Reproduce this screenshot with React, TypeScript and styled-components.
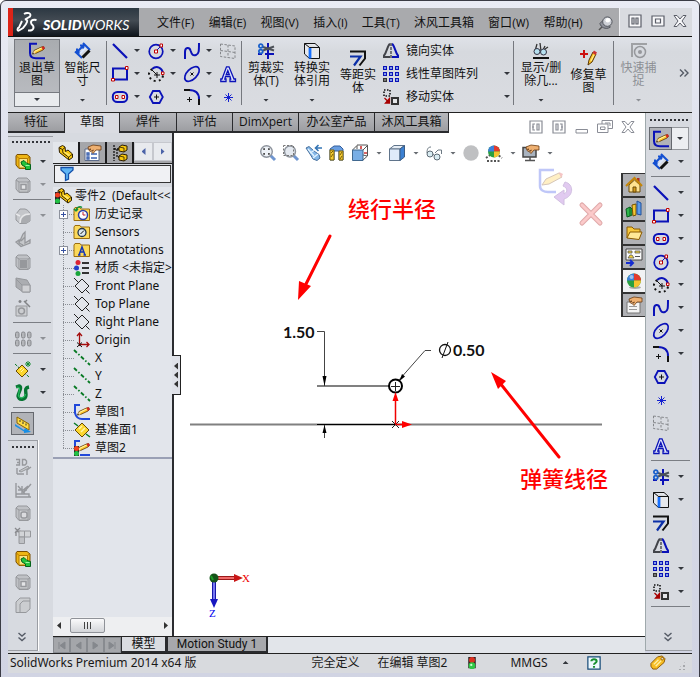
import React from 'react';
import styled, { createGlobalStyle, css } from 'styled-components';

const GlobalStyle = createGlobalStyle`
  *, *::before, *::after { box-sizing: border-box; }
  body { margin: 0; font: 12px/14px "Noto Sans", "Noto Sans CJK SC", sans-serif; color: #111; }
  button { font: inherit; color: inherit; background: none; border: 0; padding: 0; margin: 0; }
  ul { list-style: none; margin: 0; padding: 0; }
`;

/* ---------- icons ---------- */

const Svg = styled.svg<{ $size?: number }>`
  width: ${p => p.$size ?? 16}px;
  height: ${p => p.$size ?? 16}px;
  flex: none;
  display: block;
  overflow: visible;
  fill: none;
`;

const B = '#0b12b8';
const R = '#c00000';
const K = '#111';
const G = '#96989c';

const pencil = (
  <>
    <path d="M3.500 11 5 7.500 12.500 4 14.500 3.500 15.500 5.500 14 7 6.500 10.500Z" fill="#ffc62a" stroke="#5a3500" strokeWidth=".8" />
    <path d="M5.500 8.500 12.500 5" stroke="#fff3a0" strokeWidth="1.200" />
    <path d="M12.500 4 15 3.300 15.800 5.300 13.800 7Z" fill="#d22626" />
    <path d="M3.500 11 5 7.800 6.500 10.300Z" fill="#f7ddb0" />
    <path d="M3.300 11.200 4.200 9.500 5 10.600Z" fill="#111" />
  </>
);

const yellowPart = (
  <>
    <path d="M1 2 2 .5H12L15 3V12L13 14.500H4L1 11Z" fill="#eeb513" stroke="#7a4e00" />
    <path d="M4 4.500H12.500V14H4Z" fill="#fbe584" stroke="#b47a00" />
    <path d="M1.500 2 4 4.500M12.500 4.500 14.500 3" stroke="#b47a00" />
  </>
);

const partShape = (
  <>
    <path d="M1 2.500 4.500.5 7 2 7.500 6.500 10 5 14.500 9 14.500 12.500 11 15 1.500 7.500Z" fill="#f6c70f" stroke="#2c1d00" />
    <path d="M1.500 3 4.500 4.500 5 8 10.500 12V14.500M10.500 12 14 9.500M4.500 4.500 7 2.500" stroke="#2c1d00" strokeWidth=".9" />
    <path d="M5 6.500 7.500 7 12.500 10 10.500 11.500Z" fill="#ffe96a" />
  </>
);

const hand = (
  <path d="M3 2 8 0 16 1V5L11 5 8 8.500 6.500 7 8.500 5 5 6.500 4 5.500 6 4 3.500 4.500Z" fill="#eeb071" stroke="#6b3b12" strokeWidth=".8" />
);

const folder = (
  <path d="M0 3 1 1.500H6L7 3H15.500V14.500H0Z" fill="#fbd95b" stroke="#9b6e10" />
);

const greyCube = (
  <>
    <path d="M1 3 3 1H12L15 4V14L13 15.500H4L1 12Z" fill="#bfc1c5" stroke={G} />
    <path d="M4 5H13V15H4Z" fill="#cdcfd2" stroke={G} />
    <path d="M1 3 4 5M13 5 15 4" stroke={G} />
  </>
);

const icons = {
  exitSketch: <><path d="M8 .8H1V10C1 14 4 15.200 7 15.200H16" stroke={B} strokeWidth="2" />{pencil}</>,
  dimension: (
    <>
      <path d="M2 9 8 3M5 2.500H8.500V6M2 5.500V9.500H5.500M0 8.500 7 15M8 0 15 7" stroke="#1450d2" strokeWidth="2" />
      <path d="M7.500 14.500 14.500 7.500" stroke={K} strokeWidth="3" />
      <path d="M5 10.500 10.500 5" stroke="#dbe7ff" strokeWidth="2" />
    </>
  ),
  line: <path d="M1 1 15 15" stroke={B} strokeWidth="2.200" />,
  circle: (
    <>
      <circle cx="8" cy="8.500" r="6.800" stroke={B} strokeWidth="1.700" />
      <path d="M8 8 13 3" stroke={B} />
      <path d="M6.500 7H9.500V10H6.500ZM12 1H14.500V4H12Z" fill="#fff" stroke={R} />
    </>
  ),
  spline: <path d="M1 16V9C1 4 5.500 4 6.500 7.500 8 12 9 13 12 12 15 11 15 8 15 0" stroke={B} strokeWidth="2" />,
  plane: <path d="M.5 1 15 3V15.500L.5 13.500ZM.5 7.500 15 9.500M8 2V14.500" stroke="#85878b" strokeDasharray="2.500 1.500" />,
  rect: (
    <>
      <path d="M1 2.500H15V13.500H1Z" stroke={B} strokeWidth="2" />
      <path d="M-.5 12.500H2.500V15H-.5ZM13.500.5H16V3.500H13.500Z" fill="#fff" stroke={R} />
    </>
  ),
  arc: (
    <>
      <path d="M4 3C9-1 14 2 15 7" stroke={B} strokeWidth="2" />
      <path d="M15 9.500C14.500 13 12 15 8 15 4 15 1 12 1 8 1 6 2 5 4 3" stroke={K} strokeWidth="2" strokeDasharray="2 3" />
      <path d="M4 4 9 9M9 6V12M6 9H12" stroke={K} />
      <path d="M13.500 6H16V8.500H13.500Z" fill="#fff" stroke={R} />
    </>
  ),
  ellipse: (
    <>
      <ellipse cx="8" cy="8" rx="9" ry="5" transform="rotate(-45 8 8)" stroke={B} strokeWidth="1.700" />
      <path d="M6.500 6.500 9.500 9.500M9.500 6.500 6.500 9.500" stroke={K} />
    </>
  ),
  text: (
    <path d="M.8 15.500V13H2L6.500 .8H9L14 13H15.500V15.500H10V13H10.700L10 10.500H5.500L4.800 13H6V15.500ZM6.200 8.500H9.300L7.800 4.500Z" fill="#dfe5fa" stroke={B} strokeWidth="1.300" />
  ),
  slot: (
    <>
      <rect x=".8" y="3" width="14.400" height="10" rx="4.500" stroke={B} strokeWidth="2" />
      <path d="M3.500 6.500H6V9.500H3.500ZM10 6.500H12.500V9.500H10Z" fill="#fff" stroke={R} />
    </>
  ),
  polygon: (
    <>
      <path d="M5 2H11.500L14.800 8 11.500 14H5L1.800 8Z" stroke={B} strokeWidth="1.800" />
      <path d="M8.500 5.500V10.500M6 8H11" stroke={K} />
    </>
  ),
  fillet: (
    <>
      <path d="M5 1C11 1 15 4 15 10" stroke={B} strokeWidth="2" />
      <path d="M0 1H6M15 10V16" stroke={K} strokeWidth="2" />
      <path d="M5.500 8V13M3 10.500H8" stroke={K} />
    </>
  ),
  point: <path d="M8.500 4V13M4 8.500H13M5.500 5.500 11.500 11.500M11.500 5.500 5.500 11.500" stroke="#1420d0" />,
  trim: (
    <>
      <path d="M0 11H4M7 11H16M10 16V0" stroke={B} strokeWidth="2" />
      <path d="M5 4 16 7.500M5 7.500 16 3.500" stroke="#4c5158" strokeWidth="2" />
      <circle cx="2.800" cy="3" r="1.900" stroke="#1960cb" strokeWidth="1.800" />
      <circle cx="2.800" cy="8.500" r="1.900" stroke="#1960cb" strokeWidth="1.800" />
    </>
  ),
  convert: (
    <>
      <path d="M.5 .5H11L15.500 4.500V15.500H5.500L.5 11ZM.5 .5 5.500 4.500H15.500M5.500 4.500V15.500" fill="#e6e8ec" stroke={K} />
      <path d="M6 5V15.500" stroke="#1670ff" strokeWidth="2.800" />
    </>
  ),
  offset: (
    <>
      <path d="M0 1.500H15V8.500L9.500 15.500" stroke={K} strokeWidth="2" />
      <path d="M0 6.500H10.500L4 15.500" stroke="#0b2fa8" strokeWidth="2.200" />
    </>
  ),
  mirror: (
    <>
      <path d="M7 1C4.500 2 4 9 1 12.500V14H7" stroke="#42444a" strokeWidth="2" />
      <path d="M9 1C11.500 2 12 9 15 12.500V14H9" stroke={B} strokeWidth="2" />
      <path d="M8 0V16" stroke={K} strokeDasharray="3 1" />
    </>
  ),
  pattern: (
    <>
      {[0, 6, 12].map(y => [0, 6, 12].map(x => (
        <g key={`${x}-${y}`}>
          <path d={`M${x} ${y}h4v4h-4Z`} fill={x === 0 && y === 12 ? '#333' : B} />
          <path d={`M${x + 1} ${y + 1}h2v2h-2Z`} fill={x === 0 && y === 12 ? '#777' : '#7f9bea'} />
        </g>
      )))}
    </>
  ),
  move: (
    <>
      <path d="M1 1H7V7H1Z" stroke={K} strokeWidth="1.600" strokeDasharray="1.500 1.500" />
      <path d="M9 9H15V15H9Z" fill="#e5e6e8" stroke="#333" strokeWidth="2" />
      <path d="M1.500 9 5 12.500M6.500 9.500V14H2.500Z" fill="#a80000" stroke="#a80000" strokeWidth="1.300" />
    </>
  ),
  display: (
    <>
      <path d="M4 1 2 8M7 0 8 8M12 3 10 7M15 4 12 6" stroke="#333" strokeWidth="1.300" />
      <circle cx="4" cy="8.500" r="3" fill="#b6e0ef" stroke="#334" />
      <circle cx="10.500" cy="9" r="3" fill="#b6e0ef" stroke="#334" />
      <path d="M0 15H16" stroke={K} strokeWidth="2" />
    </>
  ),
  repair: (
    <>
      <path d="M-1 4H7M3 0V8" stroke="#cc1010" strokeWidth="2" />
      <path d="M7 15 8 10 12 2 15 4 11 12Z" fill="#ffc62a" stroke="#5a3500" />
      <path d="M11.500 3 13 .5 16 2.500 14.500 5Z" fill="#c33" />
      <path d="M10 11 13 5" stroke="#fff3a0" />
    </>
  ),
  snap: (
    <>
      <path d="M0 1H16M1 0V14" stroke="#9fa1a4" strokeWidth="2" />
      <circle cx="9" cy="9" r="5.500" stroke={G} strokeWidth="1.500" />
      <circle cx="9" cy="9" r="2" fill={G} />
    </>
  ),
  greenPart: (
    <>
      {yellowPart}
      <path d="M6 8 9 6.500 12 9.500 15.500 10.500V15.500H10.500V13L7 11Z" fill="#23c33b" stroke="#04631b" />
      <path d="M10.500 11.500H14.500" stroke="#9bf5a5" />
    </>
  ),
  greyPart: <>{greyCube}<path d="M6 7.500H11V12.500H6Z" fill="#e3e4e6" stroke={G} strokeWidth="1.500" /></>,
  greySphere: (
    <>
      <path d="M1 6 5 1H10C13 2 15 4 15 7V13L11 15.500H5L1 12Z" fill="#c4c6ca" stroke={G} />
      <path d="M5 15C5 9 8 6 15 6M1 6 5 8" stroke="#e6e7e9" strokeWidth="1.500" />
      <path d="M6 15C6 10 9 7 15 7V13L11 15.500Z" fill="#aaacb0" />
    </>
  ),
  greyRib: <path d="M1 11 4 9V12L8 3 10 1V12L15 9V12L6 15.500ZM6 10 10 6M4 12 8 14" fill="#c6c8cb" stroke={G} strokeWidth="1.300" />,
  greyShell: <>{greyCube}<path d="M5 6H12V14H5Z" fill="#96989c" /></>,
  greyDraft: <><path d="M1 1 12 3 15 8V15H8L1 10Z" fill="#abadb1" stroke={G} /><path d="M7 8H15V15H7ZM1 2 7 8" fill="#d0d1d4" stroke={G} /></>,
  greyWand: (
    <>
      <path d="M1 6H12V16H1Z" fill="#ccced1" stroke={G} />
      <circle cx="6.500" cy="11" r="3" stroke={G} strokeWidth="1.500" />
      <path d="M9 1 15 7M5 0V3M3.500 1.500H6.500M12 0 10 2" stroke="#828487" strokeWidth="1.500" />
    </>
  ),
  greyPattern: (
    <>
      {[0, 6, 12].map(x => [1, 9].map(y => (
        <rect key={`${x}-${y}`} x={x + .5} y={y} width="3.500" height="6" rx="1.500" fill="#b4b6ba" stroke="#86888c" />
      )))}
    </>
  ),
  refGeom: (
    <>
      <path d="M0 2 14 15" stroke="#087a24" strokeDasharray="3 1" />
      <path d="M1 9 7 3 13 9 7 15Z" fill="#fcd62f" stroke="#6a4b00" />
      <path d="M5 8 7 6M6 10 9 7" stroke="#fff6a8" />
      <path d="M13 -1V5M10 2H16M11 0 15 4M15 0 11 4" stroke="#168b33" />
    </>
  ),
  curves: (
    <>
      <path d="M1 2 4 1C8 2 3 8 3 11 4 16 11 15 11 10 11 6 9 3 14 2" stroke="#067432" strokeWidth="3.400" />
      <path d="M2 2C7 2 3 8 3.500 11 5 14 10 13 10.500 9" stroke="#24bd5d" strokeWidth="1.200" />
    </>
  ),
  instant: (
    <>
      <path d="M2 1 14 8V14L2 7Z" fill="#ffdc42" stroke="#8b6500" />
      <path d="M5 4V6M8 5.500V8M11 7.500V9.500" stroke="#333" />
      <path d="M0 8 9 14 10 12 16 16 9 17 9 15.500 0 10Z" fill="#188fe6" />
    </>
  ),
  sketch3d: (
    <>
      <path d="M1 .5H4.500V6H1M2 3.500H4.500M7.500 .5V6H10L11.500 4.500V2L10 .5ZM2 15H9M2 15V9M12 16V11L16 8" stroke={G} strokeWidth="1.400" />
      <path d="M4 12 13 7 14 9 6 13Z" fill="#c5c7ca" stroke={G} />
    </>
  ),
  greyChart: <path d="M1 1V15H16M1 12H14V15M3 4 10 12M13 4 7 9M16 2 9 10M7 4V12M3 8H12" stroke={G} strokeWidth="1.400" />,
  greyBox: <>{greyCube}<rect x="6" y="7" width="6" height="6" rx="2" fill="#dadbde" stroke={G} strokeWidth="1.500" /></>,
  greyTree: (
    <>
      <path d="M0 0 5 5M5 0 0 5M1 8V3.500H6" stroke="#88898d" strokeWidth="1.300" />
      <path d="M4 3H9.500V9H4ZM9.500 3H15.500V9H9.500Z" fill="#d2d4d7" stroke={G} />
      <path d="M4 9H9.500V15.500H4Z" fill="#bfc1c5" stroke={G} />
    </>
  ),
  greyCorner: <path d="M1 5 5 1H15V12L11 15.500H1ZM5 15V7L8 4H15" fill="#cbcdd0" stroke={G} />,
  part: partShape,
  partLight: (
    <>
      <g transform="translate(2 0)">{partShape}</g>
      <path d="M0 4H5V16H0Z" fill="#222" />
      <circle cx="2.500" cy="7" r="2.500" fill="#f04020" />
      <circle cx="2.500" cy="13" r="2.500" fill="#22c044" />
    </>
  ),
  properties: (
    <>
      <path d="M0 4H14V15.500H0Z" fill="#fff" stroke="#5c6b89" />
      <path d="M2 8H4V10H2ZM2 12H4V14H2ZM6 9H12M6 13H12" stroke="#3c62b0" strokeWidth="1.300" />
      {hand}
    </>
  ),
  config: (
    <>
      <path d="M2 0V16M2 4H8M5 4V12H8" stroke={K} strokeWidth="1.300" strokeDasharray="2 1" />
      <path d="M7 2 10 0 15 1V5L12 7 7 6ZM7 11 10 9 15 10V14L12 16 7 15Z" fill="#f6c70f" stroke="#2c1d00" />
      <path d="M7 2 12 3V7M7 11 12 12V16" stroke="#2c1d00" strokeWidth=".8" />
    </>
  ),
  filter: <path d="M2 1.500H14V4L9.500 8V13L6.500 14.500V8L2 4Z" fill="#5fb5f5" stroke="#1551ab" strokeWidth="1.300" />,
  history: (
    <>
      {folder}
      <circle cx="9" cy="9" r="4.500" fill="#fff" stroke="#2b3fa8" strokeWidth="1.500" />
      <path d="M9 6V9H11.500" stroke="#c01e2c" /><path d="M2 5C2 1 6 0 8 1.500M2 5 0 3M2 5 4 3" stroke="#11903a" strokeWidth="1.500" />
    </>
  ),
  sensors: <>{folder}<circle cx="8" cy="8.500" r="4" fill="#dbe8ee" stroke="#25364a" strokeWidth="1.300" /><path d="M6.500 10 10 6.500" stroke={K} /></>,
  annotations: <>{folder}<path d="M4 13H6.500M9.500 13H12M5 13 8 5 11 13M6 10H10" stroke="#1636b4" strokeWidth="1.500" /></>,
  material: (
    <>
      <circle cx="4" cy="2.500" r="2.500" fill="#dc2334" /><circle cx="2.500" cy="8" r="2.500" fill="#243fc9" /><circle cx="4" cy="13.500" r="2.500" fill="#18a43a" />
      <path d="M8 3H15M8 8H15M8 13H15" stroke="#333" strokeWidth="1.800" />
    </>
  ),
  refPlane: <path d="M0 0 5 5M11 11 15.500 15.500M8 1 15 8 8 15 1 8ZM8 1 15 8" stroke="#222" />,
  origin: <><path d="M5.500 14V1M3 4 5.500 1 8 4M5 12.500H15M12.500 10 15 12.500 12.500 15" stroke="#a40d0d" strokeWidth="1.300" /><path d="M3 10.500 8 15M8 10.500 3 15" stroke={K} /></>,
  axis: <path d="M0 0 16 15" stroke="#087a24" strokeWidth="1.800" strokeDasharray="4 2 1.500 2" />,
  plane1: <><path d="M0 1 4 4M12 12 16 15" stroke="#087a24" strokeWidth="1.500" /><path d="M1 8 8 1 15 8 8 15Z" fill="#fcd62f" stroke="#6a4b00" /><path d="M5 7 8 4M7 10 11 6" stroke="#fff6a8" strokeWidth="1.500" /></>,
  sketchTree: <><path d="M6 1H1V9C2 13 5 15 8 15H16" stroke="#2148da" strokeWidth="2" />{pencil}</>,
  sketchLight: (
    <>
      <path d="M6 1H1V9M6 15H16" stroke="#2148da" strokeWidth="2" />{pencil}
      <path d="M0 6H5V16H0Z" fill="#222" /><circle cx="2.500" cy="8.500" r="2.500" fill="#f04020" /><circle cx="2.500" cy="13.500" r="2.500" fill="#22c044" />
    </>
  ),
  zoomFit: (
    <>
      <path d="M10 10 15 15" stroke="#6f95cf" strokeWidth="3" /><circle cx="6.500" cy="6.500" r="5.800" fill="#eef2f7" stroke="#8d939c" strokeWidth="1.400" />
      <path d="M4 5V4H5M8 4H9V5M9 8V9H8M5 9H4V8" stroke="#444" strokeWidth="1.500" />
    </>
  ),
  zoomArea: (
    <>
      <path d="M10 10 15 15" stroke="#6f95cf" strokeWidth="3" /><circle cx="7" cy="6.500" r="5.500" fill="#e4e9f0" stroke="#8d939c" strokeWidth="1.400" />
      <path d="M.5 .5H10.500V10.500H.5Z" stroke="#777" strokeDasharray="2 1.500" />
    </>
  ),
  prevView: (
    <>
      <path d="M0 3 3 1.500 8 6 13 9.500 14 13 11 15.500 7 14 4 9Z" fill="#85b8e8" stroke="#466f9d" />
      <path d="M2 4 8 11M4 8 8 5.500M7 13 12 9" stroke="#e3f3ff" strokeWidth="1.300" />
      <path d="M10 3H16M12.500 0 9.500 3 12.500 6" stroke="#3575b5" strokeWidth="1.600" />
    </>
  ),
  section: (
    <>
      <path d="M1 4 5 1H11L14 4V15H10V6H5V15H1Z" fill="#699ee1" stroke="#335f9c" />
      <path d="M1 5H5V15H1ZM10 6H14V15H10Z" fill="#f3ca33" stroke="#7a6008" />
      <path d="M2 8 4 6M2 12 4 9M11 10 13 7M11 14 13 11" stroke="#7a6008" />
    </>
  ),
  orient: <><path d="M5 0H15.500V11L11 15M.5 5 5 .5M11 5 15.500.5M5 .5V4M11 10 15 11" stroke="#555" /><path d="M.5 5H11V15.500H.5Z" fill="#79aee5" stroke="#41688f" /><path d="M9 1V4M12 8H15" stroke="#d03434" strokeWidth="1.600" /></>,
  style: <><path d="M.5 4 5 .5H15.500L11 4Z" fill="#e6edf5" stroke="#60748b" /><path d="M.5 4H11V15.500H.5Z" fill="#dfeafa" stroke="#60748b" /><path d="M11 4 15.500.5V12L11 15.500Z" fill="#3b80d2" stroke="#3c5d84" /></>,
  glasses: <><path d="M1 8C1 4 2 2 5 2M9 8 12 5 15.500 5V9" stroke="#6d7a84" /><circle cx="4" cy="9" r="3" fill="#d9ecf2" stroke="#5e6b75" /><circle cx="11" cy="12" r="3" fill="#d9ecf2" stroke="#5e6b75" /><path d="M6.500 9 8.500 10.500" stroke="#5e6b75" /></>,
  greyBall: <circle cx="8" cy="8" r="7.700" fill="#bfc0c2" />,
  ball: (
    <>
      <ellipse cx="9" cy="14.500" rx="6" ry="1.500" fill="#aaa" />
      <circle cx="8" cy="7.500" r="7" fill="#2aa040" /><path d="M8 7.500V.5A7 7 0 0 1 15 7.500Z" fill="#e33a2d" />
      <path d="M8 7.500H15A7 7 0 0 1 8 14.500Z" fill="#f6c330" /><path d="M8 7.500H1A7 7 0 0 1 8 .5Z" fill="#3c80da" /><circle cx="5.500" cy="4" r="2" fill="#fff" opacity=".5" />
    </>
  ),
  scene: (
    <>
      <path d="M0 13 4 10H12L16 13M1 16H15" stroke="#555" strokeWidth="2" strokeDasharray="2 1.500" />
      <circle cx="8" cy="6.500" r="6" fill="#2aa040" /><path d="M8 6.500V.5A6 6 0 0 1 14 6.500Z" fill="#e33a2d" /><path d="M8 6.500H14A6 6 0 0 1 8 12.500Z" fill="#f6c330" /><path d="M8 6.500H2A6 6 0 0 1 8 .5Z" fill="#3c80da" />
    </>
  ),
  viewSettings: <><path d="M0 2.500H13V12H0Z" fill="#a9b3bf" stroke="#444" strokeWidth="1.500" /><path d="M7 12V15M2 15.500H12" stroke="#555" strokeWidth="1.500" />{hand}</>,
  home: <><path d="M11 1H13.500V6H11Z" fill="#b02e20" /><path d="M3 8V15H14V8L8.500 3Z" fill="#ffe391" stroke="#6a4a08" /><path d="M0 9 8.500 1 16 9" stroke="#c58608" strokeWidth="2" /><path d="M7 10H10V15H7Z" fill="#d59b1d" stroke="#6a4a08" /></>,
  library: <><path d="M0 8 4 6V15L1 16ZM4 6 6 8V14L4 15" fill="#2eb64a" stroke="#0a5c20" /><path d="M6 4 10 3V14L7 15Z" fill="#f4c534" stroke="#755400" /><path d="M11 0 15 2V14L11 13Z" fill="#5b9bea" stroke="#20509a" /></>,
  openFolder: <><path d="M1 13V2H6L8 4H14V8" fill="#f7c83c" stroke="#8a5a00" /><path d="M1 13 4 7H16L13 14.500Z" fill="#ffe896" stroke="#8a5a00" /></>,
  palette: <><path d="M0 0H16V11H0Z" fill="#fafafa" stroke="#444" /><path d="M2 2H6V4H2ZM9 2H14V4H9ZM2 9 4 6H6L8 9Z" fill="#f6d43a" stroke="#555" strokeWidth=".8" /><path d="M9 7.500H14" stroke="#555" /><path d="M0 14H6M4 11 7 14 4 17" stroke="#142bd0" strokeWidth="2" /></>,
  custom: <><path d="M1 5H14V16H1Z" fill="#f4f4f4" stroke="#777" /><path d="M3 9.500H11M3 12.500H11" stroke="#999" />{hand}</>,
  light: <><path d="M3 0H13V15H3Z" fill="#2b2222" /><circle cx="8" cy="4" r="4" fill="#dc3020" /><circle cx="8" cy="11.500" r="4.500" fill="#31c746" /><circle cx="7" cy="10.500" r="1.500" fill="#caffcf" /></>,
  help: <><path d="M1 1H15V15H1Z" fill="#eefaff" stroke="#174b77" strokeWidth="1.400" /><path d="M5 6C5 3 11 3 11 6 11 8 8 8 8 10M8 11.500V13.500" stroke="#17902f" strokeWidth="2.400" /></>,
  tag: <><path d="M1 9 8 2 13 1 16 4 15 8 7 15 3 15 1 12Z" fill="#f7bd22" stroke="#8c5600" /><path d="M4 10 9 5M6 12 12 6" stroke="#fff0a5" strokeWidth="1.500" /><circle cx="13" cy="4" r="1.300" fill="#fff" stroke="#8c5600" /></>,
  pin: <><path d="M1 15 5 11" stroke="#555" strokeWidth="1.500" /><path d="M2 8C3 12 8 15 13 12L12 9 5 5Z" fill="#8e919a" stroke="#4e5159" /><circle cx="10" cy="6" r="5" fill="#cdd0d6" stroke="#4e5159" /><circle cx="10.500" cy="4.500" r="2.500" fill="#fff" /></>,
  split: <path d="M2 2H14V14H2ZM5 5H7V11H5ZM9 5H11V11H9Z" fill="#f8f8fa" stroke="#5b5e68" strokeWidth="1.200" />,
  restore: <path d="M2 3H14V13H2ZM5.500 6H10.500V10H5.500Z" fill="#f8f8fa" stroke="#5b5e68" strokeWidth="1.200" />,
  close: <path d="M2 2.500H5L8 6 11 2.500H14L10 8 14 13.500H11L8 10 5 13.500H2L6 8Z" fill="#f8f8fa" stroke="#5b5e68" />,
  dockLeft: <path d="M2 2H14V14H2ZM7 5H5V11H7M9 5H11V11H9ZM4 8H6" stroke="#8a8d96" strokeWidth="1.200" />,
  dockRight: <path d="M2 2H14V14H2ZM5 5H7V11H5ZM9 5H11V11H9M10 8H12" stroke="#8a8d96" strokeWidth="1.200" />,
  minimize: <path d="M2 10.500H13.500V14H2Z" fill="#fff" stroke="#8a8d96" />,
  cascade: <path d="M5 5V1.500H15.500V9.500H11M.5 5H11V13.500H.5ZM3.500 8H8V10.500H3.500ZM8 4H13V7" stroke="#8a8d96" />,
  closeView: <path d="M2 2.500H5L8 6 11 2.500H14L10 8 14 13.500H11L8 10 5 13.500H2L6 8Z" fill="#fff" stroke="#8a8d96" />,
  chevronDown: <path d="M4.500 4 8 7 11.500 4M4.500 8.500 8 11.500 11.500 8.500" stroke="#555b66" strokeWidth="1.400" />,
  chevronRight: <path d="M4 4.500 7.500 8 4 11.500M8.500 4.500 12 8 8.500 11.500" stroke="#555b66" strokeWidth="1.400" />,
};

type IconName = keyof typeof icons;

const Icon = ({ name, size }: { name: IconName; size?: number }) => (
  <Svg viewBox="0 0 16 16" $size={size} aria-hidden="true">{icons[name]}</Svg>
);

/* ---------- shared pieces ---------- */

const Caret = styled.span<{ $grey?: boolean; $up?: boolean }>`
  width: 6px;
  height: 3px;
  flex: none;
  background: ${p => (p.$grey ? '#8d9095' : '#33363c')};
  clip-path: ${p => (p.$up ? 'polygon(50% 0, 100% 100%, 0 100%)' : 'polygon(0 0, 100% 0, 50% 100%)')};
`;

const IconButton = styled.button`
  display: grid;
  place-items: center;
  flex: none;
`;

/* ---------- frame ---------- */

const Frame = styled.div`
  min-height: 100vh;
  display: flex;
  flex-direction: column;
  padding: 7px 7px 5px;
  border: 1px solid #3a3b45;
  border-radius: 6px 6px 2px 2px;
  background: linear-gradient(#e9ebf4, #dcdeeb 30%, #d1d4e3);
`;

const TitleBar = styled.header`
  display: flex;
  align-items: stretch;
  height: 29px;
  background: #a9aaad;
  border-bottom: 1px solid #111;
`;

const Brand = styled.div`
  display: flex;
  align-items: center;
  gap: 6px;
  width: 131px;
  flex: none;
  padding-left: 4px;
  border-left: 5px solid #dc2418;
  background: linear-gradient(#2c3842, #434b53 45%, #10161d);
  color: #fff;
  font: italic 400 14px/18px Lato, sans-serif;
`;

const BrandName = styled.span`
  padding-top: 6px;
  b { font-weight: 900; }
`;

const Menu = styled.nav`
  display: flex;
  align-items: center;
  flex: 1;
  gap: 14px;
  padding: 2px 6px 0 18px;
  white-space: nowrap;
`;

const PinButton = styled(IconButton)`margin-left: auto;`;

const MenuButton = styled.button`
  font: 12px/16px "Open Sans", "Noto Sans CJK SC", sans-serif;
  small { font: 11px/14px Roboto, sans-serif; }
`;

const WindowControls = styled.div`
  display: flex;
  align-items: center;
  justify-content: space-between;
  width: 73px;
  flex: none;
  padding: 0 4px 2px 7px;
  background: #d9dbe0;
  border-left: 1px solid #f0f1f4;
`;

const Push = styled.span`margin-left: auto;`;

const Ribbon = styled.div`
  display: flex;
  height: 76px;
  padding: 2px 0 5px 6px;
  background: linear-gradient(#dfe2e8, #d6d9de 20%, #dadce1);
  border-bottom: 1px solid #222;
`;

const BigButton = styled.button<{ $w: number; $active?: boolean; $disabled?: boolean; $drop?: number }>`
  width: ${p => p.$w}px;
  flex: none;
  display: flex;
  flex-direction: column;
  align-items: center;
  padding-top: ${p => p.$drop ?? 4}px;
  font: 12px/13px "Open Sans", "Noto Sans CJK SC", sans-serif;
  white-space: pre-line;
  text-align: center;
  ${p => p.$active && css`border: 1px solid #777a80; background: linear-gradient(#a9acb0, #bcbec3); padding-top: 3px;`}
  ${p => p.$disabled && css`color: #8d9095;`}
`;

const BigLabel = styled.span`padding-top: 2px; flex: 1;`;

const Drop = styled.span<{ $active?: boolean }>`
  display: grid;
  place-items: center;
  align-self: stretch;
  height: 14px;
  ${p => p.$active && css`background: #e9ebee; border-top: 1px solid #777a80;`}
`;

const Rule = styled.span<{ $m: number }>`
  width: 1px;
  flex: none;
  margin: 2px ${p => p.$m}px;
  background: #75787e;
`;

const ToolGrid = styled.div`
  display: grid;
  grid-template-columns: repeat(3, 36px) 20px;
  grid-auto-rows: 23px;
  padding-left: 4px;
`;

const ToolCell = styled.button`
  display: flex;
  align-items: center;
  gap: 6px;
`;

const TextTools = styled.div`
  display: grid;
  grid-auto-rows: 23px;
  width: 129px;
  padding-left: 2px;
`;

const TextTool = styled.button`
  display: flex;
  align-items: center;
  gap: 7px;
  white-space: nowrap;
`;

const Workspace = styled.div`display: flex; flex: 1;`;
const MainColumn = styled.div`display: flex; flex-direction: column; flex: 1; min-width: 0;`;

const TabStrip = styled.div`display: flex; height: 20px; background: #fff;`;

const Tab = styled.button<{ $w: number; $active?: boolean }>`
  width: ${p => p.$w}px;
  height: 20px;
  flex: none;
  padding-bottom: 1px;
  border: solid #2a2b2e;
  border-width: 0 1px 2px 0;
  background: linear-gradient(#b7b8bc, #9d9ea2);
  font-family: "Open Sans", "Noto Sans CJK SC", sans-serif;
  white-space: nowrap;
  ${p => p.$active && css`height: 22px; background: #dadce2; border-bottom-width: 1px; padding-bottom: 3px;`}
`;

const Panels = styled.div`display: flex; flex: 1;`;
const SideTools = styled.div`display: flex; flex-direction: column; width: 45px; flex: none; background: #d7dae0; padding-top: 3px;`;

const Bar = styled.div<{ $narrow?: boolean; $grow?: boolean }>`
  display: flex;
  flex-direction: column;
  border-top: 1px solid #9a9da3;
  padding-bottom: 5px;
  ${p => p.$narrow && css`width: 30px; border-right: 1px solid #9a9da3; box-shadow: 1px 0 #fff;`}
  ${p => p.$grow && css`flex: 1; margin-bottom: 2px; padding-bottom: 0; border-bottom: 1px solid #9a9da3;`}
`;

const Grip = styled.span<{ $top: number; $bottom: number }>`
  height: 2px;
  flex: none;
  margin: ${p => p.$top}px 3px ${p => p.$bottom}px 4px;
  background: repeating-linear-gradient(90deg, #33353a 0 2px, transparent 2px 4px);
`;

const ToolRow = styled.div`
  display: flex;
  align-items: center;
  height: 23px;
  flex: none;
  padding-left: 3px;
`;

const ToolButton = styled(IconButton)<{ $active?: boolean }>`
  width: 23px;
  height: 23px;
  ${p => p.$active && css`background: #b1b3b8; border: 1px solid #65686e;`}
`;

const CaretButton = styled(IconButton)<{ $boxed?: boolean }>`
  width: 18px;
  height: 23px;
  ${p => p.$boxed && css`width: 17px; border: 1px solid #94979c; border-left: 0; background: #eceef1;`}
`;

const Divider = styled.span`
  height: 1px;
  flex: none;
  margin: 3px 2px 4px 5px;
  background: #7b7e84;
`;

const More = styled(IconButton)<{ $right?: boolean }>`
  width: 16px;
  height: 18px;
  align-self: flex-start;
  margin: auto 0 4px ${p => (p.$right ? 14 : 6)}px;
`;

/* ---------- feature tree ---------- */

const TreeColumn = styled.aside`
  display: flex;
  flex-direction: column;
  width: 119px;
  flex: none;
  padding-top: 9px;
  overflow: hidden;
  background: #d7dae0;
`;

const TreeTabs = styled.div`display: flex; height: 22px; border-bottom: 1px solid #222; background: #a5a6aa;`;

const TreeTab = styled(IconButton)<{ $active?: boolean }>`
  width: 27px;
  border-right: 2px solid #1c1c1e;
  background: ${p => (p.$active ? '#e3e6eb' : '#a5a6aa')};
`;

const Pager = styled(IconButton)`width: 19px; background: #e8eaee; border: 1px solid #c6c8ce; margin-bottom: 2px;`;

const PageArrow = styled.span<{ $left?: boolean; $dark?: boolean }>`
  width: 4px;
  height: 7px;
  background: ${p => (p.$dark ? '#333' : '#4b63a8')};
  clip-path: ${p => (p.$left ? 'polygon(0 50%, 100% 0, 100% 100%)' : 'polygon(0 0, 100% 50%, 0 100%)')};
`;

const FilterBox = styled.label`
  display: flex;
  align-items: center;
  height: 18px;
  margin: 1px 1px 4px;
  padding-left: 4px;
  border: 1px solid #333;
  background: #f0f1f4;
  input { width: 80px; height: 14px; border: 0; background: transparent; outline: 0; }
`;

const Tree = styled.div`
  flex: 1;
  background: #e2e5eb;
  ul { border-bottom: 2px solid #9aa0b5; }
`;

const TreeRoot = styled.div`
  display: flex;
  align-items: center;
  gap: 4px;
  height: 18px;
  padding-left: 2px;
  white-space: pre;
`;

const TreeItem = styled.li<{ $last?: boolean }>`
  display: flex;
  align-items: center;
  height: 18px;
  margin-left: 10px;
  white-space: pre;
  background:
    repeating-linear-gradient(90deg, #8a8d94 0 1px, transparent 1px 2px) 0 9px / 11px 1px no-repeat,
    repeating-linear-gradient(#8a8d94 0 1px, transparent 1px 2px) 0 0 / 1px ${p => (p.$last ? '10px' : '18px')} no-repeat;
  svg { margin: 0 5px 0 11px; }
`;

const Expander = styled.button`
  width: 9px;
  height: 9px;
  flex: none;
  margin: 0 -5px 0 -4px;
  border: 1px solid #8d929d;
  background: linear-gradient(#3650a0, #3650a0) 1px 3px / 5px 1px no-repeat, linear-gradient(#3650a0, #3650a0) 3px 1px / 1px 5px no-repeat, #fff;
`;

const ScrollBar = styled.div`
  display: flex;
  align-items: center;
  height: 19px;
  padding: 0 4px 2px;
  background: #eeeff1;
`;

const Thumb = styled.span`
  display: flex;
  justify-content: center;
  gap: 2px;
  width: 35px;
  height: 15px;
  margin: 0 auto 0 9px;
  padding-top: 3px;
  border: 1px solid #8f9298;
  border-radius: 2px;
  background: linear-gradient(#fafafb, #d3d5d9);
  i { width: 1px; height: 7px; background: #444; }
`;

/* ---------- viewport ---------- */

const Viewport = styled.main`
  position: relative;
  flex: 1;
  min-width: 0;
  border-left: 2px solid #2b2c30;
  background: #fff;
`;

const Drawing = styled.svg`
  display: block;
  width: 100%;
  height: 503px;
  font-family: "Noto Sans CJK SC", sans-serif;
`;

const ViewControls = styled.div`
  position: absolute;
  top: -14px;
  right: 9px;
  display: flex;
  gap: 7px;
`;

const HeadsUp = styled.div`
  position: absolute;
  top: 12px;
  left: 86px;
  display: flex;
  gap: 7px;
`;

const HeadsUpTool = styled.button`
  display: flex;
  align-items: center;
  gap: 8px;
  & > ${Caret} { background: #666a70; }
`;

const Handle = styled.button`
  position: absolute;
  left: -2px;
  top: 222px;
  width: 9px;
  height: 40px;
  display: flex;
  flex-direction: column;
  align-items: center;
  justify-content: center;
  gap: 2px;
  border: 1px solid #222;
  border-left: 0;
  background: #dfe1e8;
`;

const TaskPane = styled.div`
  position: absolute;
  top: 40px;
  right: 0;
  width: 24px;
`;

const TaskTab = styled(IconButton)<{ $active?: boolean }>`
  width: 24px;
  height: 24px;
  border: solid #333;
  border-width: 1px 0 1px 2px;
  background: ${p => (p.$active ? '#f1f2f4' : '#b0b1b5')};
`;

const ModelBar = styled.div`
  display: flex;
  height: 17px;
  border-top: 1px solid #222;
  background: #e2e5ea;
`;

const PageButton = styled(IconButton)`width: 17px; background: #a4a6aa; border: 1px solid #888b90; svg { width: 9px; height: 9px; }`;

const ModelTab = styled.button<{ $active?: boolean; $w: number }>`
  width: ${p => p.$w}px;
  border: solid #2a2b2e;
  border-width: 0 2px 2px 1px;
  background: ${p => (p.$active ? '#dadce1' : '#a7a8ac')};
  font: 12px/13px Roboto, "Noto Sans CJK SC", sans-serif;
  white-space: nowrap;
`;

const RightTools = styled.div`
  display: flex;
  flex-direction: column;
  width: 47px;
  flex: none;
  margin-bottom: 2px;
  border-left: 1px solid #9fa9ac;
  border-bottom: 1px solid #9a9da3;
  background: #d7dae0;
`;

const StatusBar = styled.footer`
  display: flex;
  align-items: center;
  height: 20px;
  padding: 0 6px 2px 2px;
  border-top: 1px solid #222;
  background: #d8dade;
  white-space: nowrap;
  color: #181818;
`;

const StatusItem = styled.span<{ $ml: number }>`
  display: flex;
  align-items: center;
  gap: 15px;
  margin-left: ${p => p.$ml}px;
`;

const Resize = styled.span`
  width: 9px;
  height: 9px;
  margin: 6px 0 0 12px;
  clip-path: polygon(100% 0, 100% 100%, 0 100%);
  background: conic-gradient(#a5a7ab 25%, transparent 0) 0 0 / 4px 4px;
`;

/* ---------- data ---------- */

const menus: [string, string][] = [
  ['文件', '(F)'], ['编辑', '(E)'], ['视图', '(V)'], ['插入', '(I)'], ['工具', '(T)'], ['沐风工具箱', ''], ['窗口', '(W)'], ['帮助', '(H)'],
];

const sketchTools: [IconName, string, boolean][] = [
  ['line', '直线', true], ['circle', '圆', true], ['spline', '样条曲线', true], ['plane', '基准面', false],
  ['rect', '矩形', true], ['arc', '圆弧', true], ['ellipse', '椭圆', true], ['text', '文字', false],
  ['slot', '槽口', true], ['polygon', '多边形', false], ['fillet', '圆角', true], ['point', '点', false],
];

const tabs: [string, number][] = [['特征', 57], ['草图', 55], ['焊件', 57], ['评估', 56], ['DimXpert', 66], ['办公室产品', 76], ['沐风工具箱', 74]];

type Tool = { icon: IconName; caret?: boolean; grey?: boolean; active?: boolean } | 'rule';

const leftTools: Tool[] = [
  { icon: 'greenPart', caret: true }, { icon: 'greyPart', caret: true, grey: true }, 'rule',
  { icon: 'greySphere', caret: true, grey: true }, { icon: 'greyRib' }, { icon: 'greyShell' }, { icon: 'greyDraft' }, { icon: 'greyWand' }, 'rule',
  { icon: 'greyPattern', caret: true, grey: true }, 'rule',
  { icon: 'refGeom', caret: true }, { icon: 'curves', caret: true }, 'rule',
  { icon: 'instant', active: true },
];

const lowerTools: Tool[] = [
  { icon: 'sketch3d' }, { icon: 'greyChart' }, { icon: 'greyBox' }, { icon: 'greyTree' }, { icon: 'greenPart' }, { icon: 'greyPart' }, { icon: 'greyCorner' },
];

const rightTools: Tool[] = [
  { icon: 'exitSketch', caret: true, active: true }, { icon: 'dimension', caret: true }, 'rule',
  { icon: 'line', caret: true }, { icon: 'rect', caret: true }, { icon: 'slot', caret: true }, { icon: 'circle', caret: true },
  { icon: 'arc', caret: true }, { icon: 'spline', caret: true }, { icon: 'ellipse', caret: true }, { icon: 'fillet', caret: true },
  { icon: 'polygon' }, { icon: 'point' }, { icon: 'plane' }, { icon: 'text' }, 'rule',
  { icon: 'trim', caret: true }, { icon: 'convert', caret: true }, { icon: 'offset' }, { icon: 'mirror' },
  { icon: 'pattern', caret: true }, { icon: 'move', caret: true }, 'rule',
];

const treeItems: [IconName, string, boolean?][] = [
  ['history', '历史记录', true], ['sensors', 'Sensors'], ['annotations', 'Annotations', true], ['material', '材质 <未指定>'],
  ['refPlane', 'Front Plane'], ['refPlane', 'Top Plane'], ['refPlane', 'Right Plane'], ['origin', 'Origin'],
  ['axis', 'X'], ['axis', 'Y'], ['axis', 'Z'], ['sketchTree', '草图1'], ['plane1', '基准面1'], ['sketchLight', '草图2'],
];

const headsUp: [IconName, boolean][] = [
  ['zoomFit', false], ['zoomArea', false], ['prevView', false], ['section', false], ['orient', true],
  ['style', true], ['glasses', true], ['greyBall', false], ['scene', true], ['viewSettings', true],
];

const taskTabs: IconName[] = ['home', 'library', 'openFolder', 'palette', 'ball', 'custom'];
const viewControls: IconName[] = ['dockLeft', 'dockRight', 'minimize', 'cascade', 'closeView'];

/* ---------- components ---------- */

const ToolList = ({ tools }: { tools: Tool[] }) => (
  <>
    {tools.map((t, i) => t === 'rule' ? <Divider key={i} /> : (
      <ToolRow key={i}>
        <ToolButton $active={t.active} aria-label={t.icon}><Icon name={t.icon} /></ToolButton>
        {t.caret && <CaretButton $boxed={t.active} aria-label={`${t.icon} options`}><Caret $grey={t.grey} /></CaretButton>}
      </ToolRow>
    ))}
  </>
);

const RibbonButton = ({ icon, label, w, active, disabled, menu = true, drop }: {
  icon: IconName; label: string; w: number; active?: boolean; disabled?: boolean; menu?: boolean; drop?: number;
}) => (
  <BigButton $w={w} $active={active} $disabled={disabled} $drop={drop}>
    <Icon name={icon} />
    <BigLabel>{label}</BigLabel>
    {menu && <Drop $active={active}><Caret $grey={disabled} /></Drop>}
  </BigButton>
);

const SketchDrawing = () => (
  <Drawing viewBox="174 133 471 503" preserveAspectRatio="xMinYMin meet" role="img" aria-label="草图2">
    <path d="M190 424.500H602" stroke="#808080" strokeWidth="2" />
    <g stroke="#444" fill="none">
      <path d="M317 386H390" stroke="#808080" strokeWidth="2" />
      <path d="M317 424.500H395" stroke="#000" />
      <path d="M317 331.500H324.500V386M324.500 425V438" />
      <path d="M399 380 425 350.500H431" />
    </g>
    <path d="M322.500 376H326.500L324.500 386ZM322.500 433H326.500L324.500 425ZM399.500 381 402 374 405 376.500Z" fill="#000" />
    <circle cx="395.500" cy="386" r="6.500" fill="none" stroke="#000" strokeWidth="2" />
    <path d="M391 386.500H400M395.500 382V391M392 421 399 428M399 421 392 428" stroke="#222" />
    <path d="M395.500 424V399M395.500 424.500H403" stroke="#f00000" strokeWidth="1.500" />
    <path d="M392.500 401 395.500 392 398.500 401ZM402 421 412 424.500 402 428Z" fill="#f00" />
    <g fill="#111" fontFamily="Lato, sans-serif" fontSize="16" fontWeight="700">
      <text x="283" y="338">1.50</text>
      <text x="453" y="356">0.50</text>
    </g>
    <circle cx="445" cy="350" r="5.500" fill="none" stroke="#111" strokeWidth="1.300" />
    <path d="M442 358 448 342" stroke="#111" />
    <path d="M330 236 304 288M559 457 500 383" stroke="#f00" strokeWidth="3" strokeLinecap="round" />
    <path d="M298 300 299 281 311 286ZM491 372 506 381 498 389Z" fill="#f00" />
    <g fill="#f00" fontFamily='"Liberation Serif", "Noto Sans CJK SC", serif' fontSize="22" fontWeight="500">
      <text x="348" y="217">绕行半径</text>
      <text x="520" y="487">弹簧线径</text>
    </g>
    <path d="M214 578H234" stroke="#9b1919" strokeWidth="4" /><path d="M214 578H234" stroke="#f06a6a" strokeWidth="2" />
    <path d="M214 580V600" stroke="#1818a8" strokeWidth="4" /><path d="M214 580V600" stroke="#7777f3" strokeWidth="2" />
    <path d="M234 574 243 578 234 582Z" fill="#c81616" /><path d="M210 599 214 608 218 599Z" fill="#1717c0" />
    <circle cx="214" cy="578" r="4.500" fill="#155319" />
    <path d="M211 576 213 580" stroke="#1c9a26" strokeWidth="2" />
    <g fontFamily='"Liberation Serif", serif' fontSize="11">
      <text x="242" y="582" fill="#e00">X</text><text x="209" y="617" fill="#00e">Z</text>
    </g>
    <g opacity=".35">
      <path d="M554 170H540V186C540 190 544 192 548 192H556" fill="none" stroke="#4b62ec" strokeWidth="2.500" />
      <path d="M542 185 546 179 559 173 562 177 549 184Z" fill="#ffd35a" stroke="#8a5c33" />
      <path d="M559 172 563 174 561 178" fill="#e35b5b" />
      <path d="M565 182C574 184 574 196 564 199V205L554 197 564 190V194C568 192 568 188 563 186Z" fill="#aa6bd6" stroke="#7d4aaa" />
    </g>
    <path d="M582 205 600 223M600 205 582 223" stroke="#dfa9a9" strokeWidth="5" strokeLinecap="round" />
    <path d="M582 205 600 223M600 205 582 223" stroke="#fbcaca" strokeWidth="3" strokeLinecap="round" />
  </Drawing>
);

const pageGlyphs = ['M2 1V8M8 1 3 4.500 8 8Z', 'M7 1 2 4.500 7 8Z', 'M2 1 7 4.500 2 8Z', 'M1 1 6 4.500 1 8ZM7 1V8'];

export default function App() {
  return (
    <Frame>
      <GlobalStyle />
      <TitleBar>
        <Brand>
          <Svg viewBox="0 0 20 20" $size={20} aria-hidden="true">
            <path d="M7 2C10 0 15 1 13 4.500L8 7.500C12 7 10 12 6 16L2 18.500C0 19.500 0 16 2 15.500L5 9M19.500 8C15 7 13 9 14.500 12 18 15 17 19 11 18.500" stroke="#fff" strokeWidth="1.900" />
          </Svg>
          <BrandName><b>SOLID</b>WORKS</BrandName>
        </Brand>
        <Menu>
          {menus.map(([name, key]) => <MenuButton key={name}>{name}{key && <small>{key}</small>}</MenuButton>)}
          <PinButton aria-label="固定"><Icon name="pin" size={15} /></PinButton>
        </Menu>
        <WindowControls>
          <IconButton aria-label="平铺"><Icon name="split" /></IconButton>
          <IconButton aria-label="还原"><Icon name="restore" /></IconButton>
          <IconButton aria-label="关闭"><Icon name="close" /></IconButton>
        </WindowControls>
      </TitleBar>

      <Ribbon>
        <RibbonButton icon="exitSketch" label={'退出草\n图'} w={46} active />
        <RibbonButton icon="dimension" label={'智能尺\n寸'} w={45} />
        <Rule $m={1} />
        <ToolGrid>
          {sketchTools.map(([icon, label, caret]) => (
            <ToolCell key={icon} aria-label={label}><Icon name={icon} />{caret && <Caret />}</ToolCell>
          ))}
        </ToolGrid>
        <Rule $m={1} />
        <RibbonButton icon="trim" label={'剪裁实\n体(T)'} w={46} />
        <RibbonButton icon="convert" label={'转换实\n体引用'} w={46} />
        <RibbonButton icon="offset" label={'等距实\n体'} w={46} menu={false} drop={11} />
        <TextTools>
          <TextTool><Icon name="mirror" />镜向实体</TextTool>
          <TextTool><Icon name="pattern" />线性草图阵列<Push /><Caret /></TextTool>
          <TextTool><Icon name="move" />移动实体<Push /><Caret /></TextTool>
        </TextTools>
        <Rule $m={3} />
        <RibbonButton icon="display" label={'显示/删\n除几...'} w={48} />
        <RibbonButton icon="repair" label={'修复草\n图'} w={47} menu={false} drop={11} />
        <Rule $m={1} />
        <RibbonButton icon="snap" label={'快速捕\n捉'} w={47} disabled />
        <Push />
        <IconButton aria-label="更多"><Icon name="chevronRight" /></IconButton>
      </Ribbon>

      <Workspace>
        <MainColumn>
          <TabStrip role="tablist">
            {tabs.map(([name, w]) => <Tab key={name} role="tab" $w={w} $active={name === '草图'}>{name}</Tab>)}
          </TabStrip>
          <Panels>
            <SideTools>
              <Bar><Grip $top={4} $bottom={7} /><ToolList tools={leftTools} /></Bar>
              <Bar $narrow $grow>
                <Grip $top={5} $bottom={7} />
                <ToolList tools={lowerTools} />
                <More aria-label="更多工具"><Icon name="chevronDown" /></More>
              </Bar>
            </SideTools>
            <MainColumn>
              <Panels>
                <TreeColumn>
                  <TreeTabs role="tablist">
                    <TreeTab $active role="tab" aria-label="特征树"><Icon name="part" /></TreeTab>
                    <TreeTab role="tab" aria-label="属性"><Icon name="properties" /></TreeTab>
                    <TreeTab role="tab" aria-label="配置"><Icon name="config" /></TreeTab>
                    <Pager aria-label="上一页"><PageArrow $left /></Pager>
                    <Pager aria-label="下一页"><PageArrow /></Pager>
                  </TreeTabs>
                  <FilterBox><Icon name="filter" /><input aria-label="过滤" /></FilterBox>
                  <Tree>
                    <TreeRoot><Icon name="partLight" />零件2  (Default&lt;&lt;</TreeRoot>
                    <ul>
                      {treeItems.map(([icon, label, expandable], i) => (
                        <TreeItem key={label} $last={i === treeItems.length - 1}>
                          {expandable && <Expander aria-label={`展开 ${label}`} />}
                          <Icon name={icon} />{label}
                        </TreeItem>
                      ))}
                    </ul>
                  </Tree>
                  <ScrollBar>
                    <PageArrow $left $dark /><Thumb><i /><i /><i /></Thumb><PageArrow $dark />
                  </ScrollBar>
                </TreeColumn>
                <Viewport>
                  <SketchDrawing />
                  <ViewControls>
                    {viewControls.map(n => <IconButton key={n} aria-label={n}><Icon name={n} /></IconButton>)}
                  </ViewControls>
                  <HeadsUp>
                    {headsUp.map(([n, caret]) => <HeadsUpTool key={n} aria-label={n}><Icon name={n} />{caret && <Caret />}</HeadsUpTool>)}
                  </HeadsUp>
                  <Handle aria-label="收起面板"><PageArrow $left $dark /><PageArrow $left $dark /><PageArrow $left $dark /></Handle>
                  <TaskPane role="tablist">
                    {taskTabs.map(n => <TaskTab key={n} role="tab" aria-label={n} $active={n === 'ball'}><Icon name={n} /></TaskTab>)}
                  </TaskPane>
                </Viewport>
              </Panels>
              <ModelBar>
                {pageGlyphs.map(d => (
                  <PageButton key={d} aria-label="翻页"><Svg viewBox="0 0 9 9"><path d={d} fill="#85888d" stroke="#85888d" /></Svg></PageButton>
                ))}
                <ModelTab $active $w={46}>模型</ModelTab>
                <ModelTab $w={101}>Motion Study 1</ModelTab>
              </ModelBar>
            </MainColumn>
          </Panels>
        </MainColumn>
        <RightTools>
          <Grip $top={6} $bottom={6} />
          <ToolList tools={rightTools} />
          <More $right aria-label="更多工具"><Icon name="chevronDown" /></More>
        </RightTools>
      </Workspace>

      <StatusBar>
        <span>SolidWorks Premium 2014 x64 版</span>
        <StatusItem $ml={115}>完全定义</StatusItem>
        <StatusItem $ml={18}>在编辑 草图2</StatusItem>
        <StatusItem $ml={19}><Icon name="light" size={12} /></StatusItem>
        <StatusItem $ml={32}>MMGS<Caret $up /></StatusItem>
        <StatusItem $ml={18}><Icon name="help" size={14} /></StatusItem>
        <Push />
        <Icon name="tag" size={15} />
        <Resize />
      </StatusBar>
    </Frame>
  );
}
